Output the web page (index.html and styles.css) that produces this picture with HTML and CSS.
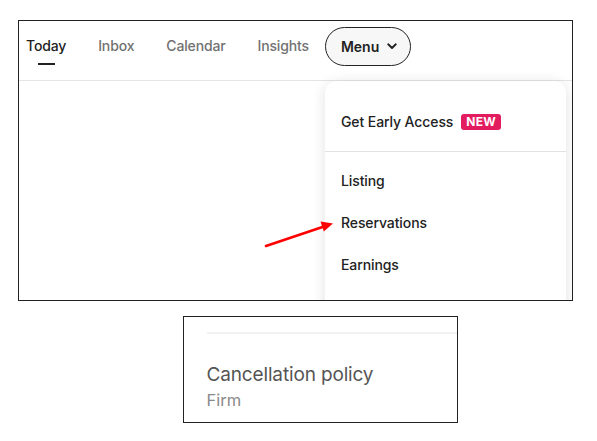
FILE: index.html
```html
<!DOCTYPE html>
<html>
<head>
<meta charset="utf-8">
<link rel="stylesheet" href="styles.css">
</head>
<body>
<div class="page">
  <div class="shot shot-top">
    <nav class="nav">
      <a class="tab active">Today</a>
      <a class="tab">Inbox</a>
      <a class="tab">Calendar</a>
      <a class="tab">Insights</a>
      <button class="menu-btn">Menu
        <svg class="chev" width="10" height="7" viewBox="0 0 10 7"><path d="M1.2 1.3 L5 5 L8.8 1.3" fill="none" stroke="#222" stroke-width="1.9" stroke-linecap="round" stroke-linejoin="round"/></svg>
      </button>
    </nav>
    <div class="content"></div>
    <div class="dropdown">
      <div class="dd-section first">
        <div class="dd-item">Get Early Access <span class="badge">NEW</span></div>
      </div>
      <div class="dd-section">
        <div class="dd-item">Listing</div>
        <div class="dd-item">Reservations</div>
        <div class="dd-item">Earnings</div>
      </div>
    </div>
  </div>
  <div class="shot shot-bottom">
    <div class="rule"></div>
    <div class="policy-title">Cancellation policy</div>
    <div class="policy-value">Firm</div>
  </div>
  <svg class="arrow" width="597" height="441" viewBox="0 0 597 441">
    <line x1="266" y1="246" x2="324" y2="226.5" stroke="#ff0000" stroke-width="2.6" stroke-linecap="round"/>
    <polygon points="333,223.5 320.5,221.5 323.8,231.5" fill="#ff0000"/>
  </svg>
</div>
</body>
</html>
```

FILE: styles.css
```css
* { box-sizing: border-box; }
html, body { margin: 0; padding: 0; background: #fff; }
body { font-family: "Inter", "Noto Sans", sans-serif; color: #222; }
.page { position: relative; width: 597px; height: 441px; padding-top: 20px; }
.shot { border: 1.5px solid #222; background: #fff; overflow: hidden; }
.shot-top { position: relative; margin-left: 18px; width: 555px; height: 281px; }
.nav { display: flex; align-items: flex-start; height: 60px; border-bottom: 1px solid #e4e4e4; padding: 5.5px 0 0 7px; }
.tab { position: relative; font-size: 14px; font-weight: 500; color: #717171; margin-right: 32px; letter-spacing: -0.15px; line-height: 20px; margin-top: 9.5px; }
.tab.active { color: #222; }
.tab.active::after { content: ""; position: absolute; left: 50%; margin-left: -8.5px; width: 17px; height: 2px; background: #222; top: 27px; }
.tab:nth-child(4) { margin-right: 16px; }
.menu-btn { display: flex; align-items: center; gap: 8px; height: 39px; width: 86px; border: 1.5px solid #222; border-radius: 20px; background: #f7f7f7; padding: 0 0 0 15px; font-family: inherit; font-size: 14px; font-weight: 600; color: #222; }
.chev { margin-top: 1px; }
.content { height: 219px; }
.dropdown { position: absolute; left: 305.5px; top: 59.5px; width: 241px; height: 260px; background: #fff; border-radius: 12px; box-shadow: 0 2px 14px rgba(0,0,0,0.12); }
.dd-section { border-top: 1px solid #e2e2e2; padding: 8px 0; }
.dd-section.first { border-top: none; padding: 29px 0 17px; }
.dd-item { display: flex; align-items: center; height: 42px; padding-left: 16.5px; font-size: 14px; font-weight: 500; color: #222; letter-spacing: -0.1px; }
.dd-section.first .dd-item { height: 24px; }
.badge { display: inline-block; margin-left: 8px; background: #e31c5f; color: #fff; font-size: 12px; font-weight: 700; letter-spacing: 0.3px; line-height: 16px; padding: 0 5px; border-radius: 3px; }
.shot-bottom { margin-left: 182.5px; margin-top: 15px; width: 275px; height: 107px; padding: 15px 0 0 23px; }
.rule { height: 2px; background: #f1f1f1; margin-right: -2px; }
.policy-title { margin-top: 29px; font-size: 19px; color: #555; line-height: 24px; letter-spacing: -0.15px; }
.policy-value { margin-top: 2px; font-size: 16.5px; color: #8a8a8a; line-height: 22px; }
.arrow { position: absolute; left: 0; top: 0; pointer-events: none; }
```
